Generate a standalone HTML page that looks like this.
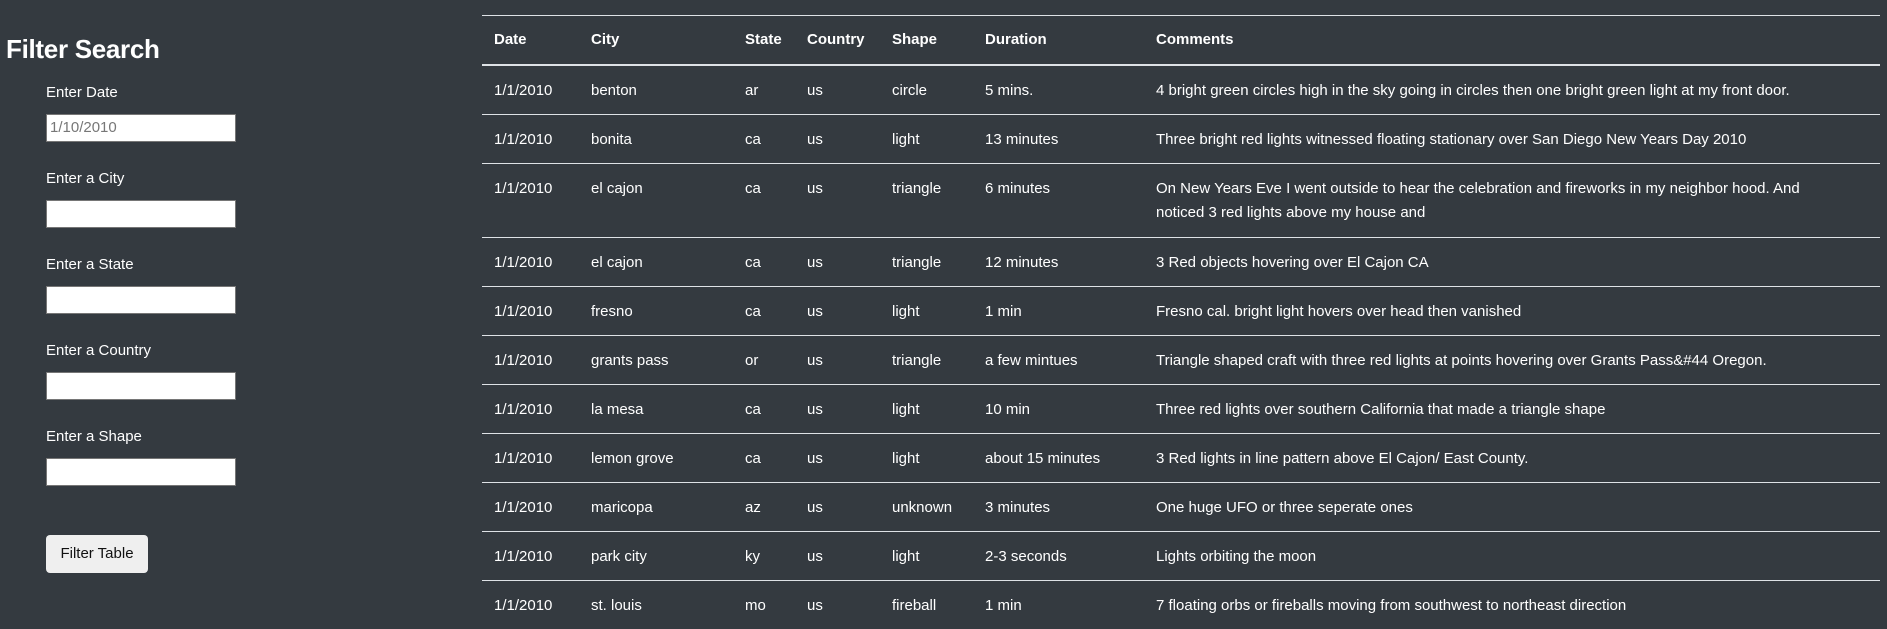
<!DOCTYPE html>
<html><head><meta charset="utf-8"><style>
html,body{margin:0;padding:0;background:#343a40;width:1887px;height:606px;overflow:hidden;font-family:"Liberation Sans",sans-serif;color:#fff}
h2{position:absolute;left:6px;top:34px;margin:0;font-size:26px;font-weight:bold;letter-spacing:-0.3px}
.lab{position:absolute;left:46px;font-size:15px}
.inp{position:absolute;left:46px;width:185px;height:26px;background:#fff;border:1px solid #767676;font-size:15px;color:#777;line-height:26px;padding-left:3px;box-sizing:content-box}
.btn{position:absolute;left:46px;top:535px;width:102px;height:38px;background:#efefef;border-radius:4px;color:#111;font-size:15px;text-align:center;line-height:38px}
table{position:absolute;left:482px;top:15px;width:1398px;border-collapse:collapse;font-size:15px}
th,td{padding:0 12px;text-align:left;white-space:nowrap;vertical-align:top;border-top:1px solid #dee2e6}
th{height:48px;line-height:48px;border-bottom:2px solid #dee2e6;font-weight:bold}
td{height:49px;padding-top:13px;box-sizing:border-box;line-height:24px}
tr.tall td{height:74px}
</style></head><body>
<h2>Filter Search</h2>
<div class="lab" style="top:84px">Enter Date</div><div class="inp" style="top:114px">1/10/2010</div>
<div class="lab" style="top:170px">Enter a City</div><div class="inp" style="top:200px"></div>
<div class="lab" style="top:256px">Enter a State</div><div class="inp" style="top:286px"></div>
<div class="lab" style="top:342px">Enter a Country</div><div class="inp" style="top:372px"></div>
<div class="lab" style="top:428px">Enter a Shape</div><div class="inp" style="top:458px"></div>
<div class="btn">Filter Table</div>
<table>
<colgroup><col style="width:97px"><col style="width:154px"><col style="width:62px"><col style="width:85px"><col style="width:93px"><col style="width:171px"><col></colgroup>
<tr><th>Date</th><th>City</th><th>State</th><th>Country</th><th>Shape</th><th>Duration</th><th>Comments</th></tr>
<tr><td>1/1/2010</td><td>benton</td><td>ar</td><td>us</td><td>circle</td><td>5 mins.</td><td>4 bright green circles high in the sky going in circles then one bright green light at my front door.</td></tr>
<tr><td>1/1/2010</td><td>bonita</td><td>ca</td><td>us</td><td>light</td><td>13 minutes</td><td>Three bright red lights witnessed floating stationary over San Diego New Years Day 2010</td></tr>
<tr class="tall"><td>1/1/2010</td><td>el cajon</td><td>ca</td><td>us</td><td>triangle</td><td>6 minutes</td><td>On New Years Eve I went outside to hear the celebration and fireworks in my neighbor hood. And<br>noticed 3 red lights above my house and</td></tr>
<tr><td>1/1/2010</td><td>el cajon</td><td>ca</td><td>us</td><td>triangle</td><td>12 minutes</td><td>3 Red objects hovering over El Cajon CA</td></tr>
<tr><td>1/1/2010</td><td>fresno</td><td>ca</td><td>us</td><td>light</td><td>1 min</td><td>Fresno cal. bright light hovers over head then vanished</td></tr>
<tr><td>1/1/2010</td><td>grants pass</td><td>or</td><td>us</td><td>triangle</td><td>a few mintues</td><td>Triangle shaped craft with three red lights at points hovering over Grants Pass&amp;#44 Oregon.</td></tr>
<tr><td>1/1/2010</td><td>la mesa</td><td>ca</td><td>us</td><td>light</td><td>10 min</td><td>Three red lights over southern California that made a triangle shape</td></tr>
<tr><td>1/1/2010</td><td>lemon grove</td><td>ca</td><td>us</td><td>light</td><td>about 15 minutes</td><td>3 Red lights in line pattern above El Cajon/ East County.</td></tr>
<tr><td>1/1/2010</td><td>maricopa</td><td>az</td><td>us</td><td>unknown</td><td>3 minutes</td><td>One huge UFO or three seperate ones</td></tr>
<tr><td>1/1/2010</td><td>park city</td><td>ky</td><td>us</td><td>light</td><td>2-3 seconds</td><td>Lights orbiting the moon</td></tr>
<tr><td>1/1/2010</td><td>st. louis</td><td>mo</td><td>us</td><td>fireball</td><td>1 min</td><td>7 floating orbs or fireballs moving from southwest to northeast direction</td></tr>
</table>
</body></html>
